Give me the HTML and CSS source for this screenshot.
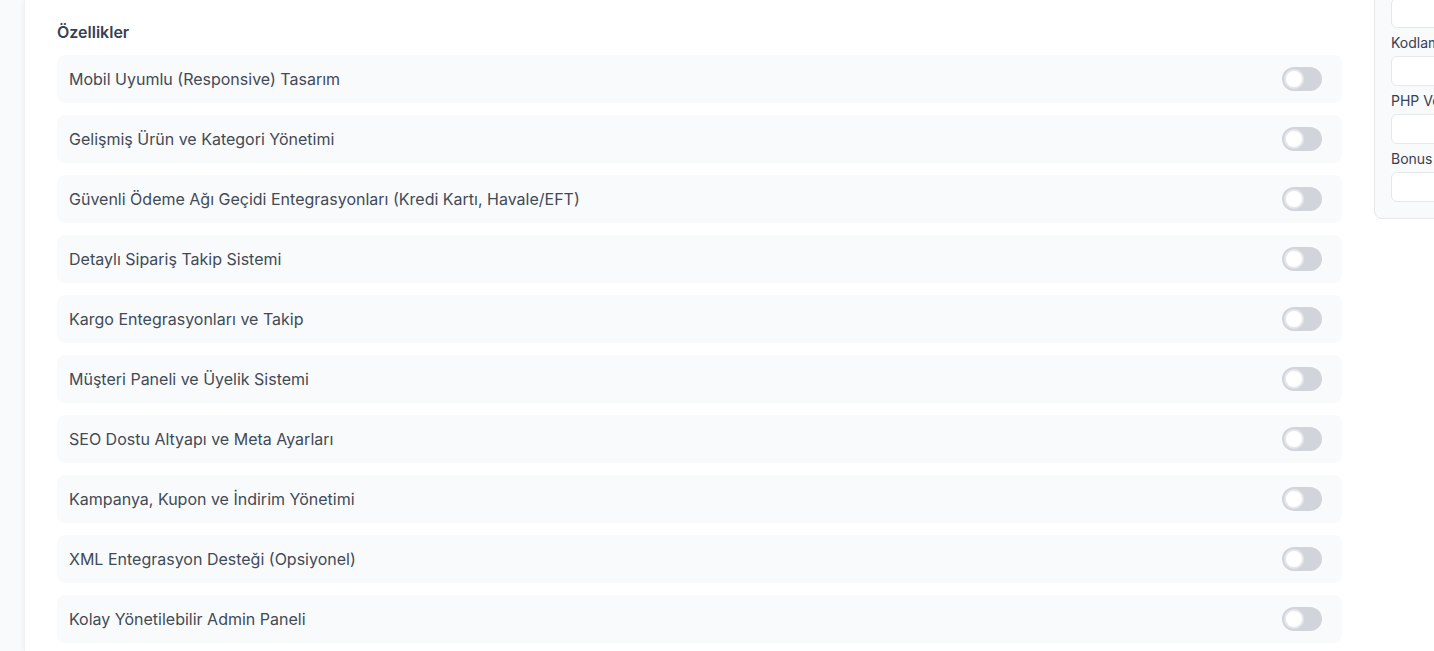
FILE: index.html
```html
<!DOCTYPE html>
<html lang="tr">
<head>
  <meta charset="UTF-8">
  <meta name="viewport" content="width=device-width, initial-scale=1.0">
  <title>Ürün Düzenle</title>
  <link rel="stylesheet" href="styles.css">
</head>
<body>
  <div class="layout">
    <div class="gutter"></div>

    <div class="panel">
      <section class="features">
        <h2 class="section-title">Özellikler</h2>

        <div class="feature-list">
          <label class="feature-row">
            <span>Mobil Uyumlu (Responsive) Tasarım</span>
            <input type="checkbox" class="toggle">
          </label>
          <label class="feature-row">
            <span>Gelişmiş Ürün ve Kategori Yönetimi</span>
            <input type="checkbox" class="toggle">
          </label>
          <label class="feature-row">
            <span>Güvenli Ödeme Ağı Geçidi Entegrasyonları (Kredi Kartı, Havale/EFT)</span>
            <input type="checkbox" class="toggle">
          </label>
          <label class="feature-row">
            <span>Detaylı Sipariş Takip Sistemi</span>
            <input type="checkbox" class="toggle">
          </label>
          <label class="feature-row">
            <span>Kargo Entegrasyonları ve Takip</span>
            <input type="checkbox" class="toggle">
          </label>
          <label class="feature-row">
            <span>Müşteri Paneli ve Üyelik Sistemi</span>
            <input type="checkbox" class="toggle">
          </label>
          <label class="feature-row">
            <span>SEO Dostu Altyapı ve Meta Ayarları</span>
            <input type="checkbox" class="toggle">
          </label>
          <label class="feature-row">
            <span>Kampanya, Kupon ve İndirim Yönetimi</span>
            <input type="checkbox" class="toggle">
          </label>
          <label class="feature-row">
            <span>XML Entegrasyon Desteği (Opsiyonel)</span>
            <input type="checkbox" class="toggle">
          </label>
          <label class="feature-row">
            <span>Kolay Yönetilebilir Admin Paneli</span>
            <input type="checkbox" class="toggle">
          </label>
        </div>
      </section>

      <aside class="sidebar">
        <div class="side-card">
          <label class="field-label">Veritabanı</label>
          <input type="text" class="field-input">
          <label class="field-label">Kodlama Dili</label>
          <input type="text" class="field-input">
          <label class="field-label">PHP Versiyonu</label>
          <input type="text" class="field-input">
          <label class="field-label">Bonus Özellikler</label>
          <input type="text" class="field-input">
        </div>
      </aside>
    </div>
  </div>
</body>
</html>
```

FILE: styles.css
```css
html, body {
  margin: 0;
  height: 100%;
  overflow: hidden;
}
body {
  font-family: 'Inter', 'Noto Sans', sans-serif;
  background: #f9fafb;
  color: #374151;
}
.layout {
  display: flex;
  height: 100%;
}
.gutter {
  flex: 0 0 24px;
}
.panel {
  flex: 0 0 auto;
  display: flex;
  gap: 32px;
  background: #fff;
  padding: 20px 0 0 32px;
  box-shadow: 0 0 6px rgba(0, 0, 0, 0.06);
  border-left: 1px solid #f0f1f3;
}
.features {
  width: 1285px;
}
.section-title {
  font-size: 16px;
  font-weight: 600;
  line-height: 24px;
  color: #374151;
  margin: 0 0 11px;
}
.feature-list {
  display: flex;
  flex-direction: column;
  gap: 12px;
}
.feature-row {
  display: flex;
  align-items: center;
  justify-content: space-between;
  background: #f9fafb;
  border-radius: 8px;
  padding: 12px 20px 12px 12px;
  font-size: 16px;
  line-height: 24px;
  color: #414a57;
}
.toggle {
  appearance: none;
  -webkit-appearance: none;
  position: relative;
  width: 40px;
  height: 24px;
  margin: 0;
  border-radius: 12px;
  background: #d1d5db;
  cursor: pointer;
}
.toggle::after {
  content: '';
  position: absolute;
  top: 2px;
  left: 2px;
  width: 16px;
  height: 16px;
  border-radius: 50%;
  background: #fff;
  border: 2px solid #e5e7eb;
  transition: left 0.2s;
}
.toggle:checked {
  background: #2563eb;
}
.toggle:checked::after {
  left: 18px;
}
.sidebar {
  width: 320px;
  margin-top: -62px;
}
.side-card {
  display: flex;
  flex-direction: column;
  background: #f9fafb;
  border: 1px solid #e5e7eb;
  border-radius: 8px;
  padding: 16px;
}
.field-label {
  font-size: 14px;
  line-height: 20px;
  color: #374151;
  margin: 5px 0 3px;
}
.field-label:first-child {
  margin-top: 0;
}
.field-input {
  height: 30px;
  box-sizing: border-box;
  border: 1px solid #e5e7eb;
  border-radius: 6px;
  background: #fff;
}
```
